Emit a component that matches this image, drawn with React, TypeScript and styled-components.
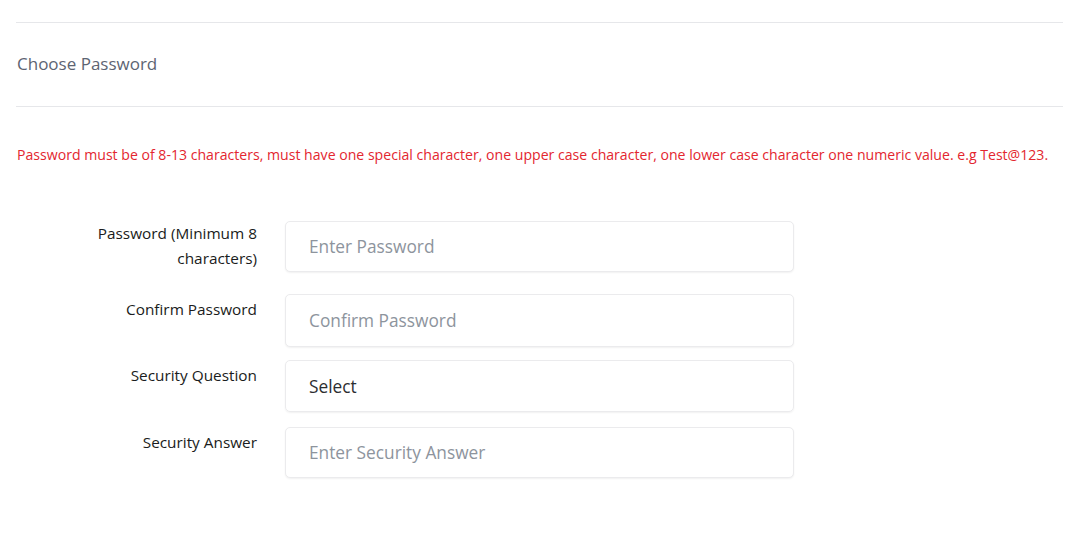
import React from 'react'
import styled, { createGlobalStyle } from 'styled-components'

//^ GLOBAL
const GlobalStyle = createGlobalStyle`
  html, body { margin: 0; padding: 0; background: #ffffff; }
  body { font-family: "Open Sans", "Noto Sans", Arial, sans-serif; }
  * { box-sizing: border-box; }
`

//^ STYLED COMPONENTS
const Page = styled.div`padding: 22px 3px 40px 16px; width: 100%;`

const SectionHeader = styled.div`border-top: 1px solid #e6e7ea; border-bottom: 1px solid #e6e7ea; padding: 29px 0 30px 1px; font-size: 17px; line-height: 24px; color: #5d6472;`

const Notice = styled.p`margin: 38px 0 56px 1px; font-size: 14.1px; line-height: 20px; color: #e3262f;`

const Form = styled.form`display: flex; flex-direction: column;`

const Row = styled.div<{ $space: number }>`display: flex; align-items: flex-start; gap: 28px; padding-left: 81px; margin-bottom: ${p => p.$space}px;`

const Label = styled.label<{ $top: number }>`width: 160px; flex: none; text-align: right; font-size: 15.35px; line-height: 25px; padding-top: ${p => p.$top}px; color: #1a1c20;`

const Field = styled.input<{ $h: number }>`
  width: 509px; height: ${p => p.$h}px; padding: 0 23px; border: 1px solid #ebebed; border-radius: 5px;
  box-shadow: 0 1px 2px rgba(0, 0, 0, 0.06); font-family: inherit; font-size: 17.3px; color: #2b2d31; outline: none; background: #fff;
  &::placeholder { color: #8d949d; }
`

const SelectBox = styled.div<{ $h: number }>`
  width: 509px; height: ${p => p.$h}px; padding: 0 23px; border: 1px solid #ebebed; border-radius: 5px;
  box-shadow: 0 1px 2px rgba(0, 0, 0, 0.06); display: flex; align-items: center; font-size: 17.3px; color: #2b2d31;
`

//^ COMPONENT
const App = () => {
  return (
    <>
      <GlobalStyle />
      <Page>
        <SectionHeader>Choose Password</SectionHeader>
        <Notice>Password must be of 8-13 characters, must have one special character, one upper case character, one lower case character one numeric value. e.g Test@123.</Notice>
        <Form onSubmit={e => e.preventDefault()}>
          <Row $space={22}>
            <Label $top={0}>Password (Minimum 8 characters)</Label>
            <Field $h={51} type="password" placeholder="Enter Password" />
          </Row>
          <Row $space={13}>
            <Label $top={3}>Confirm Password</Label>
            <Field $h={53} type="password" placeholder="Confirm Password" />
          </Row>
          <Row $space={15}>
            <Label $top={3}>Security Question</Label>
            <SelectBox $h={52}>Select</SelectBox>
          </Row>
          <Row $space={0}>
            <Label $top={3}>Security Answer</Label>
            <Field $h={51} type="text" placeholder="Enter Security Answer" />
          </Row>
        </Form>
      </Page>
    </>
  )
}

export default App
